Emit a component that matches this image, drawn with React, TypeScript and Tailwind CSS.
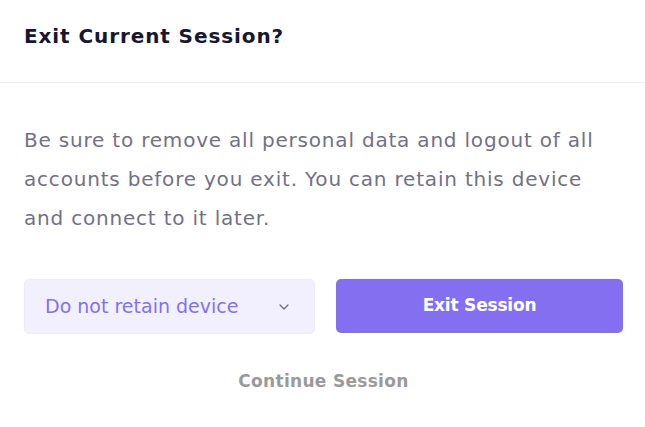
import { ChevronDown } from 'lucide-react'

export default function App() {
  return (
    <div
      className="min-h-screen w-full bg-white"
      style={{ fontFamily: '"DejaVu Sans", "Noto Sans", sans-serif' }}
    >
      <div className="flex h-[83px] items-start border-b border-[#ececee] px-6 pt-[22px]">
        <h1 className="text-[20px] leading-[29px] font-bold tracking-[0.9px] text-[#17172e]">
          Exit Current Session?
        </h1>
      </div>

      <div className="pt-[38px] pr-[22px] pl-6">
        <p className="w-[588px] text-[20px] leading-[39px] tracking-[0.8px] text-[#727184]">
          Be sure to remove all personal data and logout of all accounts before
          you exit. You can retain this device and connect to it later.
        </p>

        <div className="mt-[41px] grid grid-cols-[291px_1fr] gap-[21px]">
          <button
            type="button"
            className="flex h-[55px] items-center justify-between rounded-[5px] border border-[#ecebf8] bg-[#f2f0fe] pr-[22px] pl-[20px] text-[19px] text-[#8470f0]"
          >
            <span>Do not retain device</span>
            <ChevronDown size={16} strokeWidth={2} className="text-[#6f6e80]" />
          </button>
          <button
            type="button"
            className="h-[54px] rounded-[5px] bg-[#856ff1] text-[17px] font-bold tracking-[-0.2px] text-white"
          >
            Exit Session
          </button>
        </div>

        <div className="mt-[35px] flex justify-center">
          <button
            type="button"
            className="text-[17px] leading-[25px] font-bold tracking-[0.3px] text-[#9a9a9a]"
          >
            Continue Session
          </button>
        </div>
      </div>
    </div>
  )
}
